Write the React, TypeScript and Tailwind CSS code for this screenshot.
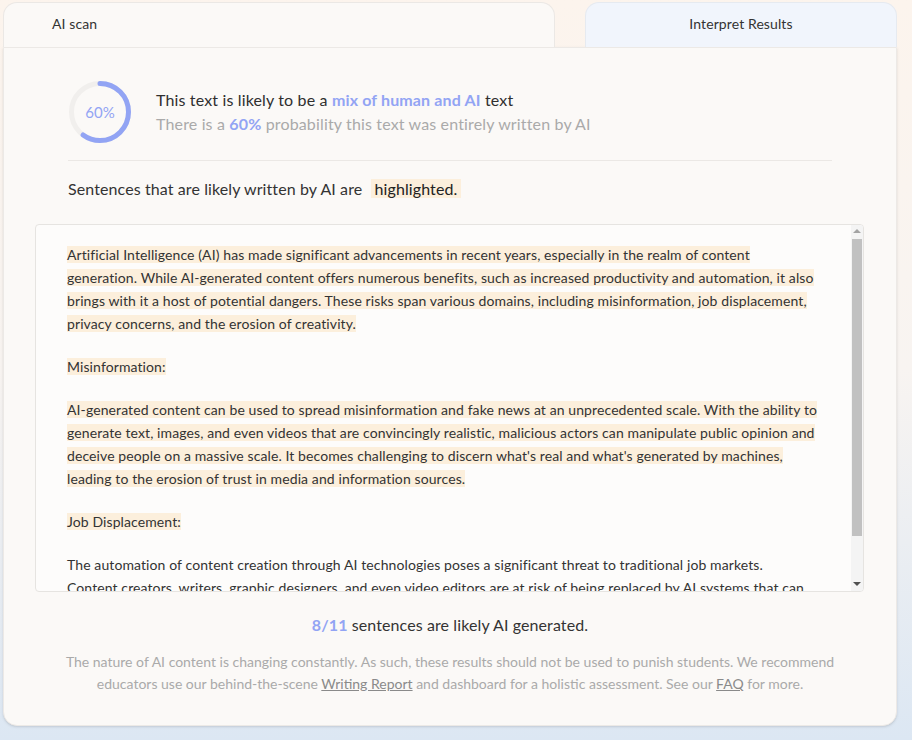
import React from 'react';

const highlighted = [
  'Artificial Intelligence (AI) has made significant advancements in recent years, especially in the realm of content generation. While AI-generated content offers numerous benefits, such as increased productivity and automation, it also brings with it a host of potential dangers. These risks span various domains, including misinformation, job displacement, privacy concerns, and the erosion of creativity.',
];

function ScoreRing({ percent }: { percent: number }) {
  const r = 28.5;
  const c = 2 * Math.PI * r;
  return (
    <div className="relative w-16 h-16 shrink-0">
      <svg width="64" height="64" viewBox="0 0 64 64" className="-rotate-90">
        <circle cx="32" cy="32" r={r} fill="none" stroke="#f1efed" strokeWidth="5" />
        <circle
          cx="32"
          cy="32"
          r={r}
          fill="none"
          stroke="#92a4f4"
          strokeWidth="5"
          strokeLinecap="round"
          strokeDasharray={`${(c * percent) / 100} ${c}`}
        />
      </svg>
      <div className="absolute inset-0 flex items-center justify-center text-[15px] text-[#92a4f4]">
        {percent}%
      </div>
    </div>
  );
}

function FakeScrollbar() {
  return (
    <div className="w-[12px] shrink-0 flex flex-col bg-[#f4f4f4]">
      <div className="h-[12px] flex items-center justify-center">
        <div className="w-0 h-0 border-l-[4px] border-r-[4px] border-b-[4px] border-l-transparent border-r-transparent border-b-[#a3a3a3]" />
      </div>
      <div className="h-[297px] mx-[1px] mt-[2px] bg-[#c1c1c1]" />
      <div className="flex-1" />
      <div className="h-[14px] flex items-center justify-center">
        <div className="w-0 h-0 border-l-[4px] border-r-[4px] border-t-[4px] border-l-transparent border-r-transparent border-t-[#505050]" />
      </div>
    </div>
  );
}

export default function App() {
  return (
    <div
      className="min-h-screen w-full bg-gradient-to-b from-[#fcf4ed] via-[#f8f4f1] to-[#dce7f3] pl-[3px] pt-[2px]"
      style={{ fontFamily: 'Lato, "Noto Sans", sans-serif' }}
    >
      <div className="w-[894px]">
        {/* Tabs */}
        <div className="flex gap-[30px]">
          <div className="w-[552px] h-[45px] rounded-t-[14px] border border-b-0 border-[#ebe8e5] bg-[#fbf9f7] flex items-center pl-[48px] pb-[3px] text-[14px] tracking-[0.1px] text-[#333]">
            AI scan
          </div>
          <div className="w-[312px] h-[45px] rounded-t-[14px] border border-b-0 border-[#e6eaf0] bg-[#f1f5fc] flex items-center justify-center pb-[3px] text-[14px] tracking-[0.1px] text-[#333]">
            Interpret Results
          </div>
        </div>

        {/* Card */}
        <div className="h-[679px] rounded-b-[14px] border border-[#ece9e6] bg-[#fbf9f7] shadow-sm">
          <div className="px-16 pt-[32px]">
            <div className="flex items-center gap-6">
              <ScoreRing percent={60} />
              <div className="text-[16px] leading-6 tracking-[0.15px]">
                <p className="text-[#2f2f2f]">
                  This text is likely to be a <span className="font-bold text-[#92a4f4]">mix of human and AI</span> text
                </p>
                <p className="text-[#aaa]">
                  There is a <span className="font-bold text-[#92a4f4]">60%</span> probability this text was entirely written by AI
                </p>
              </div>
            </div>
            <div className="mt-4 h-px bg-[#ebe8e5]" />
            <p className="mt-4 text-[16px] leading-6 tracking-[0.1px] text-[#333]">
              Sentences that are likely written by AI are{' '}
              <span className="ml-1 px-1 bg-[#fcefdc] text-[#222]">highlighted.</span>
            </p>
          </div>

          <div className="ml-[31px] mr-8 mt-[23px] h-[368px] flex overflow-hidden rounded border border-[#e6e4e1] bg-[#fdfcfb]">
            <div className="flex-1 overflow-hidden pl-[31px] pr-[28px] pt-[18px] text-[14px] leading-[23px] tracking-[0.1px] text-[#333]">
              {highlighted.map((t, i) => (
                <p key={i} className="mb-5">
                  <span className="bg-[#fcefdc]">{t}</span>
                </p>
              ))}
              <p className="mb-5">
                <span className="bg-[#fcefdc]">Misinformation:</span>
              </p>
              <p className="mb-5">
                <span className="bg-[#fcefdc]">
                  AI-generated content can be used to spread misinformation and fake news at an unprecedented scale. With the ability to generate text, images, and even videos that are convincingly realistic, malicious actors can manipulate public opinion and deceive people on a massive scale. It becomes challenging to discern what's real and what's generated by machines, leading to the erosion of trust in media and information sources.
                </span>
              </p>
              <p className="mb-5">
                <span className="bg-[#fcefdc]">Job Displacement:</span>
              </p>
              <p>
                The automation of content creation through AI technologies poses a significant threat to traditional job markets.
                <br />
                Content creators, writers, graphic designers, and even video editors are at risk of being replaced by AI systems that can produce content at a fraction of the cost and time.
              </p>
            </div>
            <FakeScrollbar />
          </div>

          <p className="mt-[21px] text-center text-[16px] leading-6 tracking-[0.1px] text-[#333]">
            <span className="font-bold text-[#92a4f4]">8/11</span> sentences are likely AI generated.
          </p>

          <p className="mt-[14px] px-14 text-center text-[14px] leading-[22px] text-[#aaa]">
            The nature of AI content is changing constantly. As such, these results should not be used to punish students. We recommend educators use our behind-the-scene{' '}
            <a className="underline text-[#8a8a8a]">Writing Report</a> and dashboard for a holistic assessment. See our{' '}
            <a className="underline text-[#8a8a8a]">FAQ</a> for more.
          </p>
        </div>
      </div>
    </div>
  );
}
